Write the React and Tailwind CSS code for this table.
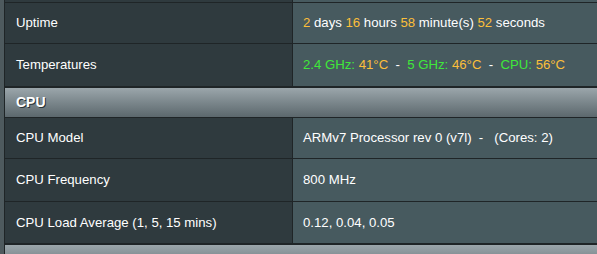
const Y = ({ children }) => <span className="text-[#fbbf3a]">{children}</span>
const G = ({ children }) => <span className="text-[#3fe83a]">{children}</span>

const Row = ({ label, children, h = 'h-[41px]' }) => (
  <div className={`grid grid-cols-[287px_1px_1fr] ${h} border-b border-[#1f2527]`}>
    <div className="bg-[#2f3a3e] flex items-center pl-[11px] text-white">{label}</div>
    <div className="bg-[#1f2527]" />
    <div className="bg-[#475a5f] flex items-center pl-[10px] text-white whitespace-pre">{children}</div>
  </div>
)

const Header = ({ title, h = 'h-[30px]' }) => (
  <div
    className={`${h} bg-gradient-to-b from-[#9ba6ab] to-[#5c686d] flex items-center pl-[11px] border-b border-[#1f2527] text-white font-bold text-[14px] [text-shadow:1px_1px_0_#2a3336]`}
  >
    {title}
  </div>
)

export default function App() {
  return (
    <div className="w-[597px] h-[254px] overflow-hidden bg-[#4e5a5e] pl-[4px] font-['Liberation_Sans',Arial,sans-serif] text-[13.2px]">
      <div className="border-l border-[#1f2527] h-full">
        {/* tail of previous row */}
        <Row label="" h="h-[3px]" />
        <Row label="Uptime">
          <Y>2</Y> days <Y>16</Y> hours <Y>58</Y> minute(s) <Y>52</Y> seconds
        </Row>
        <div className="border-b border-[#1f2527]">
          <Row label="Temperatures" h="h-[43px]">
            <G>2.4 GHz: </G><Y>41°C</Y>{'  -  '}<G>5 GHz: </G><Y>46°C</Y>{'  -  '}<G>CPU: </G><Y>56°C</Y>
          </Row>
        </div>
        <Header title="CPU" />
        <Row label="CPU Model" h="h-[41px]">
          {'ARMv7 Processor rev 0 (v7l)  -   (Cores: 2)'}
        </Row>
        <Row label="CPU Frequency" h="h-[43px]">800 MHz</Row>
        <div className="border-b border-[#1f2527]">
          <Row label="CPU Load Average (1, 5, 15 mins)" h="h-[42px]">0.12, 0.04, 0.05</Row>
        </div>
        <Header title="" />
      </div>
    </div>
  )
}
